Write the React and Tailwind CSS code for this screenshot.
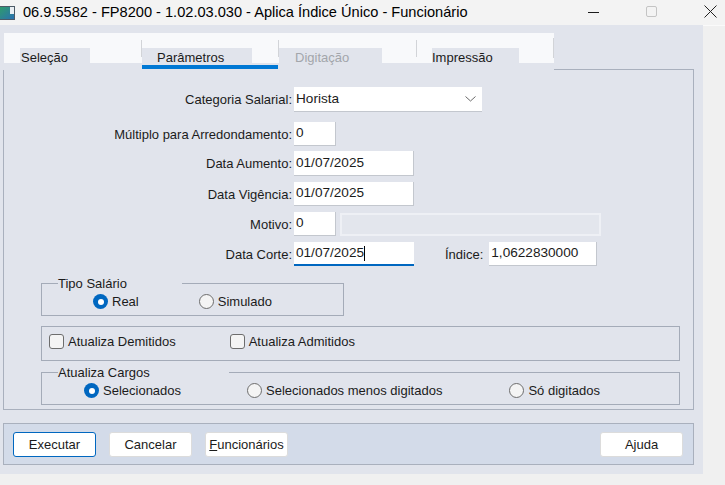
import React from "react";

const Radio = ({ checked }) =>
  checked ? (
    <span className="w-[15px] h-[15px] rounded-full bg-[#0067c0] flex items-center justify-center shrink-0">
      <span className="w-[6px] h-[6px] rounded-full bg-white" />
    </span>
  ) : (
    <span className="w-[15px] h-[15px] rounded-full border border-[#6d6d6d] bg-[#f4f4f4] shrink-0" />
  );

const Check = () => (
  <span className="w-[15px] h-[15px] rounded-[3px] border border-[#6d6d6d] bg-[#f4f4f4] shrink-0" />
);

const Row = ({ label, className, children }) => (
  <div className={`flex items-center ${className}`}>
    <div className="w-[288px] text-right text-[13px] leading-[15px]">{label}</div>
    <div className="ml-[2px] flex items-center">{children}</div>
  </div>
);

const Box = ({ className, children }) => (
  <div
    className={`h-[24px] bg-white border-b border-r border-[#c3c7ce] flex items-center px-[2px] text-[13.6px] ${className}`}
  >
    {children}
  </div>
);

const Btn = ({ children, focused }) => (
  <div
    className={`w-[83px] h-[25px] bg-white rounded-[3px] flex items-center justify-center text-[13px] ${
      focused ? "border border-[#0067c0]" : "border border-[#dcdcdc]"
    }`}
  >
    {children}
  </div>
);

const Tabs = () => (
  <div className="ml-[1px] w-[550px] h-[30px] bg-[#f8f9fb] flex items-end text-[13px] leading-[19px]">
    <div className="w-[16px]" />
    <div className="w-[70px] h-[15px] bg-[#e1e4ec] pl-[1px]">Seleção</div>
    <div className="w-[51px]" />
    <div className="w-px h-[17px] bg-[#d2d4d8] self-start mt-[7px]" />
    <div className="w-[110px] h-[15px] bg-[#e1e4ec] pl-[15px]">Parâmetros</div>
    <div className="w-[26px]" />
    <div className="w-px h-[17px] bg-[#d2d4d8] self-start mt-[7px]" />
    <div className="w-[103px] h-[15px] bg-[#e1e4ec] pl-[16px] text-[#a3a6ab]">Digitação</div>
    <div className="w-[34px]" />
    <div className="w-px h-[17px] bg-[#d2d4d8] self-start mt-[7px]" />
    <div className="w-[15px]" />
    <div className="w-[87px] h-[15px] bg-[#e1e4ec]">Impressão</div>
    <div className="w-[34px]" />
    <div className="w-px h-[20px] bg-[#d2d4d8] self-start mt-[5px]" />
  </div>
);

export default function App() {
  return (
    <div className="w-[725px] h-[485px] bg-[#f0f0f0] flex flex-col overflow-hidden text-[#1b1b1b] font-['Liberation_Sans',Arial,sans-serif]">
      {/* barra de titulo */}
      <div className="h-[25px] shrink-0 bg-[#f3f3f3] flex items-center">
        <svg width="17" height="16" viewBox="0 0 17 16" className="ml-[-1px] shrink-0">
          <defs>
            <linearGradient id="ic" x1="0" y1="0" x2="1" y2="1">
              <stop offset="0" stopColor="#2f9d6b" />
              <stop offset="1" stopColor="#2a6fb3" />
            </linearGradient>
          </defs>
          <rect x="0.5" y="1.5" width="15" height="13" fill="url(#ic)" stroke="#4d5a66" />
          <rect x="11" y="2" width="4" height="7" fill="#e9eef2" />
        </svg>
        <span className="ml-[7px] text-[14.6px] leading-[17px] text-black whitespace-nowrap">
          06.9.5582 - FP8200 - 1.02.03.030 - Aplica Índice Único - Funcionário
        </span>
        <div className="flex-1" />
        <div className="w-[11px] h-0 shrink-0 border-t border-[#1b1b1b] mr-[47px]" />
        <div className="w-[11px] h-[11px] shrink-0 border border-[#c4c4c4] rounded-[2px] mr-[47px] -mt-[2px]" />
        <svg width="13" height="13" viewBox="0 0 13 13" className="shrink-0 mr-[8px] -mt-[2px]">
          <path d="M0.5 0.5L12.5 12.5M12.5 0.5L0.5 12.5" stroke="#222" strokeWidth="1" />
        </svg>
      </div>

      <div className="flex">
        <div className="w-[703px] h-[449px] bg-[#e1e4ec] flex flex-col pl-[3px] pr-[9px] pt-[8px]">
          {/* abas */}
          <div className="flex h-[37px]">
            <div className="flex flex-col">
              <Tabs />
              <div className="ml-[139px] mt-[2px] w-[136px] h-[4px] bg-[#0078d4]" />
            </div>
            <div className="flex-1 self-end h-px bg-[#a9b0bd]" />
          </div>

          {/* painel */}
          <div className="h-[340px] border-l border-r border-b border-[#a9b0bd] flex flex-col">
            <Row label="Categoria Salarial:" className="mt-[17px]">
              <div className="w-[188px] h-[25px] bg-white border-b border-[#c3c7ce] flex items-center justify-between pl-[2px] pr-[6px] text-[13.6px]">
                <span>Horista</span>
                <svg width="11" height="6" viewBox="0 0 11 6">
                  <path d="M0.5 0.5L5.5 5L10.5 0.5" fill="none" stroke="#6a6a6a" strokeWidth="1" />
                </svg>
              </div>
            </Row>
            <Row label="Múltiplo para Arredondamento:" className="mt-[10px]">
              <Box className="w-[42px]">0</Box>
            </Row>
            <Row label="Data Aumento:" className="mt-[5px]">
              <Box className="w-[120px] h-[25px]">01/07/2025</Box>
            </Row>
            <Row label="Data Vigência:" className="mt-[6px]">
              <Box className="w-[120px]">01/07/2025</Box>
            </Row>
            <Row label="Motivo:" className="mt-[6px]">
              <Box className="w-[42px]">0</Box>
              <div className="ml-[4px] w-[261px] h-[23px] border-2 border-[#eef0f5] bg-[#e3e6ed]" />
            </Row>
            <Row label="Data Corte:" className="mt-[6px]">
              <div className="w-[120px] h-[24px] bg-white border-b-2 border-[#0067c0] flex items-center px-[2px] text-[13.6px]">
                01/07/2025
                <span className="w-px h-[15px] bg-black" />
              </div>
              <span className="ml-[31px] text-[13px] leading-[15px]">Índice:</span>
              <Box className="ml-[6px] w-[108px]">1,0622830000</Box>
            </Row>

            {/* Tipo Salario */}
            <fieldset className="ml-[37px] mt-[10px] w-[303px] border border-[#a4abb8]">
              <legend className="ml-[16px] w-[124px] text-[13px] leading-[15px]">Tipo Salário</legend>
              <div className="h-[24px] pt-[3px] flex items-start text-[13px] leading-[15px]">
                <div className="ml-[51px] flex items-center gap-[4px]">
                  <Radio checked />
                  <span>Real</span>
                </div>
                <div className="ml-[60px] flex items-center gap-[4px]">
                  <Radio />
                  <span>Simulado</span>
                </div>
              </div>
            </fieldset>

            {/* checkboxes */}
            <div className="ml-[37px] mt-[10px] w-[639px] h-[35px] border border-[#a4abb8] flex items-start pt-[7px] text-[13px] leading-[15px]">
              <div className="ml-[7px] flex items-center gap-[4px]">
                <Check />
                <span>Atualiza Demitidos</span>
              </div>
              <div className="ml-[54px] flex items-center gap-[4px]">
                <Check />
                <span>Atualiza Admitidos</span>
              </div>
            </div>

            {/* Atualiza Cargos */}
            <fieldset className="ml-[37px] mt-[4px] w-[639px] border border-[#a4abb8]">
              <legend className="ml-[16px] w-[171px] text-[13px] leading-[15px]">Atualiza Cargos</legend>
              <div className="h-[24px] pt-[3px] flex items-start text-[13px] leading-[15px]">
                <div className="ml-[42px] flex items-center gap-[4px]">
                  <Radio checked />
                  <span>Selecionados</span>
                </div>
                <div className="ml-[66px] flex items-center gap-[4px]">
                  <Radio />
                  <span>Selecionados menos digitados</span>
                </div>
                <div className="ml-[67px] flex items-center gap-[4px]">
                  <Radio />
                  <span>Só digitados</span>
                </div>
              </div>
            </fieldset>
          </div>

          {/* botoes */}
          <div className="mt-[13px] h-[42px] border border-[#a9b0bd] bg-[#d3dbe9] flex items-start pt-[8px] pl-[9px] pr-[10px]">
            <Btn focused>Executar</Btn>
            <div className="ml-[13px]">
              <Btn>Cancelar</Btn>
            </div>
            <div className="ml-[13px]">
              <Btn>
                <span>
                  <span className="underline">F</span>uncionários
                </span>
              </Btn>
            </div>
            <div className="flex-1" />
            <Btn>Ajuda</Btn>
          </div>
        </div>
        <div className="flex-1 border-t border-[#fafafa]" />
      </div>
    </div>
  );
}
